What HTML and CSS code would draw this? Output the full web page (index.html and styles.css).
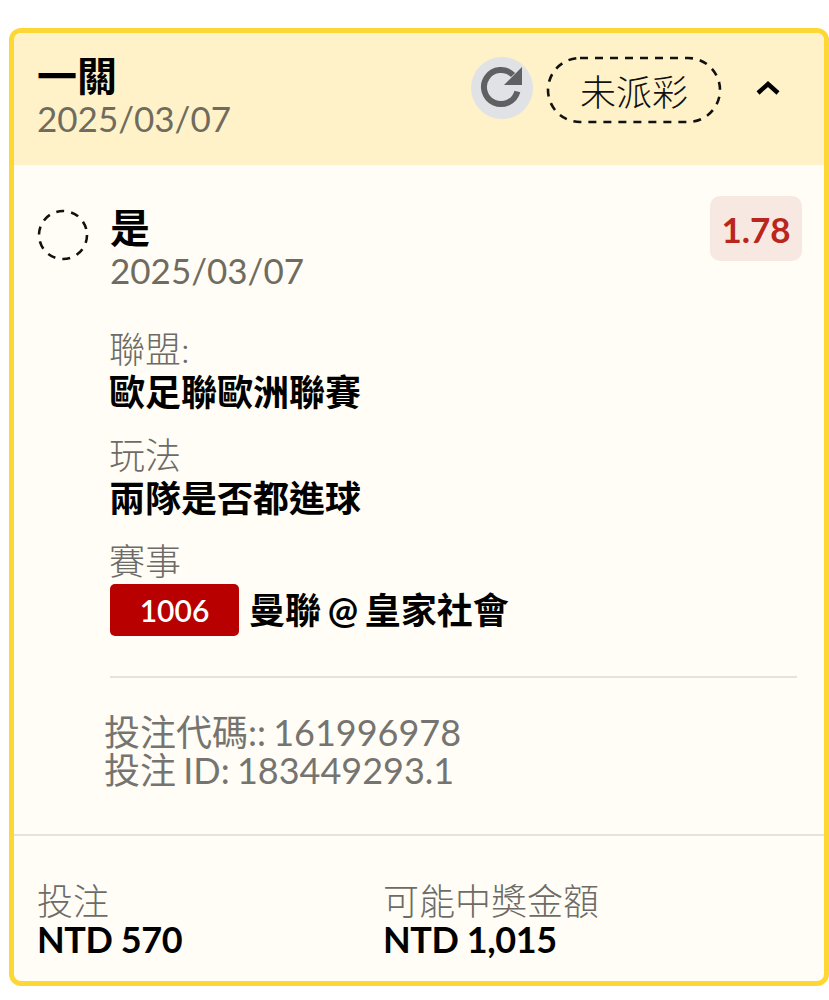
FILE: index.html
```html
<!DOCTYPE html>
<html lang="zh-Hant">
<head>
<meta charset="utf-8">
<title>一關</title>
<link rel="stylesheet" href="styles.css">
</head>
<body>
<div class="card">
  <header class="head">
    <div class="head-text">
      <div class="title">一關</div>
      <div class="date">2025/03/07</div>
    </div>
    <div class="head-actions">
      <span class="refresh">
        <svg width="62" height="62" viewBox="0 0 62 62"><path d="M42 18 A17 17 0 1 0 46.4 34.4" fill="none" stroke="#5f6062" stroke-width="6"/><path d="M51 10 V28 H33 Z" fill="#5f6062"/></svg>
      </span>
      <span class="status">
        <svg class="status-ring" width="176" height="68" viewBox="0 0 176 68"><rect x="2" y="2" width="172" height="64" rx="32" fill="none" stroke="#111" stroke-width="2.6" stroke-dasharray="8 7"/></svg>
        未派彩
      </span>
      <svg class="chevron" width="26" height="16" viewBox="0 0 26 16"><path d="M3 13 L13 4 L23 13" fill="none" stroke="#000" stroke-width="4.4"/></svg>
    </div>
  </header>
  <section class="body">
    <div class="sel">
      <svg class="circle" width="52" height="52" viewBox="0 0 52 52"><circle cx="26" cy="26" r="24" fill="none" stroke="#111" stroke-width="2.6" stroke-dasharray="8 7.08"/></svg>
      <div class="sel-main">
        <div class="sel-name">是</div>
        <div class="date">2025/03/07</div>
      </div>
      <span class="odds">1.78</span>
    </div>
    <div class="details">
      <div class="label lab-first">聯盟:</div>
      <div class="value">歐足聯歐洲聯賽</div>
      <div class="label">玩法</div>
      <div class="value">兩隊是否都進球</div>
      <div class="label">賽事</div>
      <div class="match"><span class="num">1006</span><span class="value team">曼聯 @ 皇家社會</span></div>
      <hr class="rule">
      <div class="codes">
        <div>投注代碼:: 161996978</div>
        <div>投注 ID: 183449293.1</div>
      </div>
    </div>
  </section>
  <footer class="foot">
    <div class="col">
      <div class="label">投注</div>
      <div class="amt">NTD 570</div>
    </div>
    <div class="col">
      <div class="label">可能中獎金額</div>
      <div class="amt">NTD 1,015</div>
    </div>
  </footer>
</div>
</body>
</html>
```
FILE: styles.css
```css
* { box-sizing: border-box; }
html, body { margin: 0; background: #fff; }
body {
  width: 829px;
  height: 1000px;
  overflow: hidden;
  padding: 28px 0 0 9px;
  font-family: "Lato", "Noto Sans CJK TC", sans-serif;
}
.card {
  width: 820px;
  height: 958px;
  border: 5px solid #fdd835;
  border-radius: 12px;
  background: #fffdf5;
  overflow: hidden;
}
.head {
  height: 132px;
  background: #fff2c8;
  display: flex;
  justify-content: space-between;
  padding: 20px 0 0 23px;
}
.title { font-size: 40px; line-height: 46px; font-weight: 700; color: #000; }
.date { font-size: 35px; line-height: 38px; color: #6f6c5f; }
.head-actions { display: flex; align-items: flex-start; }
.refresh {
  width: 62px; height: 62px; border-radius: 50%;
  background: #e0e2e6;
  display: flex;
  margin-top: 4px;
}
.status {
  position: relative;
  width: 176px; height: 68px;
  margin: 3px 0 0 13px;
  display: flex; align-items: center; justify-content: center;
  font-size: 36px; font-weight: 300; color: #111;
}
.status-ring { position: absolute; left: 0; top: 0; }
.chevron { margin: 27px 43px 0 33px; }
.body { height: 671px; border-bottom: 2px solid #e6e3dc; padding: 31px 22px 0 23px; }
.sel { display: flex; align-items: flex-start; }
.circle { margin-top: 13px; flex: none; }
.sel-main { flex: 1; margin-left: 21px; }
.sel-name { font-size: 40px; line-height: 46px; font-weight: 700; color: #000; margin-top: 9px; }
.odds {
  width: 92px; height: 65px; border-radius: 10px;
  background: #f7e9e2; color: #b9261d;
  font-size: 35px; font-weight: 700;
  display: flex; align-items: center; justify-content: center;
}
.details { margin-left: 72px; }
.label { font-size: 36px; font-weight: 300; line-height: 40px; color: #6c6b67; margin: 21px 0 1px; }
.lab-first { margin-top: 40px; }
.value { font-size: 36px; line-height: 44px; font-weight: 700; color: #000; }
.match { display: flex; align-items: center; gap: 10px; margin: 3px 0 0 1px; }
.team { word-spacing: -2px; }
.num {
  width: 129px; height: 52px; border-radius: 5px;
  background: #b90000; color: #fff;
  font-size: 30px; font-weight: 600;
  display: flex; align-items: center; justify-content: center;
}
.rule { border: 0; height: 2px; background: #e6e3dc; margin: 40px 5px 0 1px; }
.codes { margin: 35px 0 0 -5px; font-size: 36px; line-height: 38px; color: #757470; word-spacing: -2px; }
.foot { display: flex; padding: 45px 0 0 23px; }
.foot .label { margin: 0; line-height: 40px; }
.col { width: 346px; }
.amt { font-size: 36px; line-height: 36px; font-weight: 700; color: #000; letter-spacing: -0.4px; }
```
